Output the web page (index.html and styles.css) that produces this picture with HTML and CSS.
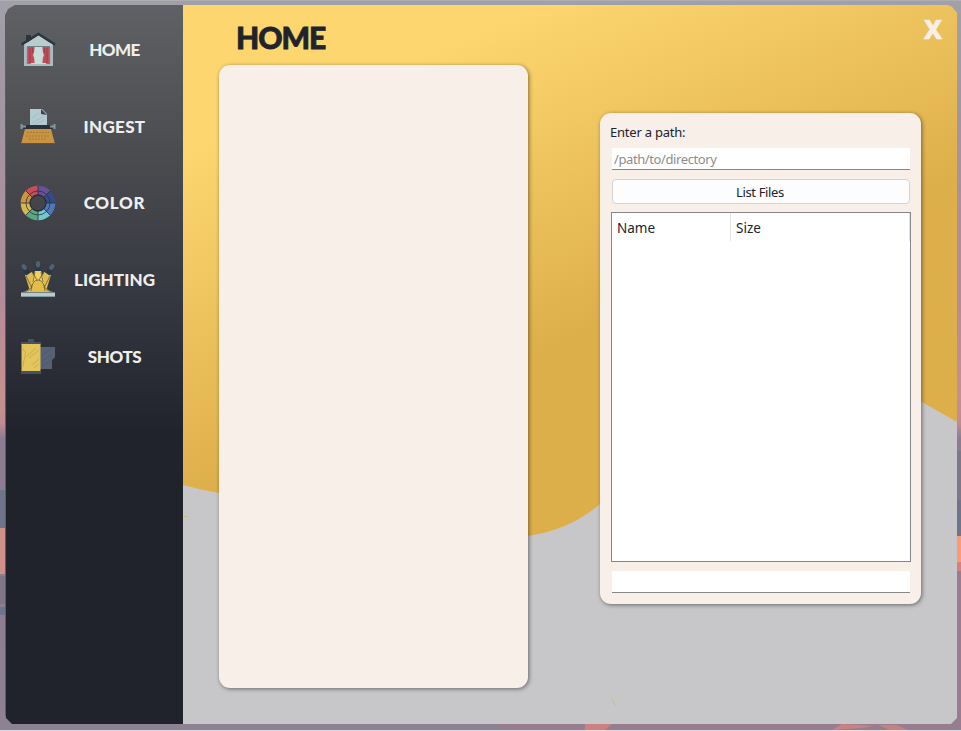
FILE: index.html
```html
<!DOCTYPE html>
<html lang="en">
<head>
<meta charset="utf-8">
<title>Home</title>
<link rel="stylesheet" href="styles.css">
</head>
<body>
<svg class="desktop" viewBox="0 0 961 731" aria-hidden="true">
  <defs>
    <linearGradient id="sky" x1="0" y1="0" x2="0" y2="1">
      <stop offset="0" stop-color="#a1a0a8"/><stop offset=".15" stop-color="#a196a3"/><stop offset=".4" stop-color="#b28c98"/><stop offset=".54" stop-color="#c68f90"/><stop offset=".58" stop-color="#c08b92"/><stop offset=".6" stop-color="#8b7c92"/><stop offset="1" stop-color="#8d8194"/>
    </linearGradient>
  </defs>
  <rect width="961" height="731" fill="url(#sky)"/>
  <rect width="961" height="1" fill="#aeadb2"/>
  <path fill="#707488" d="M0 490h6v38H0zM0 607h6v8H0zM955 500h6v36h-6z"/>
  <path fill="#ce9089" d="M0 528h6v46H0z"/>
  <path fill="#7d7789" d="M0 576h6v28H0zM955 451h6v49h-6z"/>
  <path fill="#ff9a75" d="M955 536h6v26h-6z"/>
  <path fill="#d7817e" d="M955 562h6v9h-6z"/>
  <path fill="#987d90" d="M955 571h6v160h-6zM500 723h461v8H500z"/>
  <path fill="#ca817f" d="M585 723h28l-8 7h-20zM832 730l10-6 18 1 14 1-12 2zM878 725h18l12 5h-18z"/>
  <rect y="730" width="961" height="1" fill="#dedde0"/>
</svg>
<div class="window">
  <nav class="sidebar">
    <a class="item">
      <svg class="icon" viewBox="0 0 36 36">
        <path fill="#2d3440" d="M6 4h5v7H6z"/>
        <path fill="#9fb3b5" d="M4 12h29v23H4z"/>
        <path fill="#b9cdce" d="M5 13 18.500 4 32 13v3H5z"/>
        <path fill="#6f8389" d="M7 15h23v18H7z"/>
        <path fill="#c9dcdc" d="M11 16h15v17H11z"/>
        <path fill="#c44c58" d="M8 16h6.500c0 4-.5 6-1.500 8 1 2 1.500 4 1.500 8H8zM29 16h-6.500c0 4 .5 6 1.500 8-1 2-1.500 4-1.500 8H29z"/>
        <path stroke="#853d49" stroke-width=".7" d="M10 17v15M12.500 17v5M27 17v15M24.500 17v5"/>
        <path fill="none" stroke="#2d3542" stroke-width="2.600" d="M1.500 13.500 18.500 3 35 13.500"/>
        <path stroke="#a9bdbd" stroke-width="2" d="M4 34h29M5 14v20M32 14v20"/>
      </svg>
      <span class="label w-home">HOME</span>
    </a>
    <a class="item">
      <svg class="icon" viewBox="0 0 36 36">
        <path fill="#b3cbd0" d="M10 1h12l5 5v15H10z"/><path fill="#3c464f" d="m21 1 6 6-6-1z"/>
        <path stroke="#98b1b7" stroke-width=".6" d="m12 10 7-5M12 15l12-7M12 18l12-6"/>
        <path fill="#29313d" d="M5 17h26l2 4H3z"/>
        <path stroke="#85979d" stroke-width="2" d="M1 18.500h5M30 18.500h5M1.500 16v5M34.500 16v5"/>
        <path fill="#c9933f" d="M5 21h26l4 15H1z"/><path fill="#6c5132" d="M1 35h34v1H1z"/>
        <path stroke="#9a7338" stroke-width=".8" stroke-dasharray="2 1" d="M7 24.500h22M6 28h24M9 31h18"/>
      </svg>
      <span class="label w-ingest">INGEST</span>
    </a>
    <a class="item">
      <svg class="icon" viewBox="0 0 36 36">
        <g fill="none" stroke-width="9" stroke-dasharray="10 70.425">
          <circle cx="18" cy="18" r="12.800" stroke="#68509a" transform="rotate(-90 18 18)"/>
          <circle cx="18" cy="18" r="12.800" stroke="#344b88" transform="rotate(-45 18 18)"/>
          <circle cx="18" cy="18" r="12.800" stroke="#5076bd" transform="rotate(0 18 18)"/>
          <circle cx="18" cy="18" r="12.800" stroke="#70cad0" transform="rotate(45 18 18)"/>
          <circle cx="18" cy="18" r="12.800" stroke="#58a980" transform="rotate(90 18 18)"/>
          <circle cx="18" cy="18" r="12.800" stroke="#d4b850" transform="rotate(135 18 18)"/>
          <circle cx="18" cy="18" r="12.800" stroke="#cf963f" transform="rotate(180 18 18)"/>
          <circle cx="18" cy="18" r="12.800" stroke="#c64e58" transform="rotate(225 18 18)"/>
        </g>
        <circle cx="18" cy="18" r="12" fill="none" stroke="#30323f" stroke-width=".8"/>
        <circle cx="18" cy="18" r="8" fill="none" stroke="#292d39" stroke-width="1.300"/>
        <path stroke="#2c303a" stroke-width=".8" d="M18 1v9M18 26v9M1 18h9M26 18h9M6 6l6 6M24 24l6 6M30 6l-6 6M12 24l-6 6"/>
      </svg>
      <span class="label w-color">COLOR</span>
    </a>
    <a class="item">
      <svg class="icon" viewBox="0 0 36 36">
        <path fill="#dfbd52" d="m5 14 7-3 8 19H10zM31 14l-7-3-8 19h10z"/>
        <path fill="#f0d166" d="M15 10h6l2 6 2 15H11l2-15z"/>
        <path fill="#e2bd4c" d="M3 31q6-2 8-5 2-7 7-7t7 7q2 3 8 5z"/>
        <path fill="none" stroke="#695d35" stroke-width=".8" d="m6 15 6 12M13 12l4 7M30 15l-6 12M23 12l-4 7M15 11l-2 10M21 11l2 10M11 30q1-11 7-11t7 11M3 31q8-1 9-7M33 31q-8-1-9-7"/>
        <path stroke="#2b3746" stroke-width="5" d="m4.500 8 4 5M18 5v5M31.500 8l-4 5"/>
        <path stroke="#506171" stroke-width="4" stroke-linecap="round" d="m3.500 5 1.500 2M18 2v2.500M32.500 5 31 7"/>
        <path fill="#b6cbca" d="M1 31.500h34V36H1z"/><path stroke="#82999d" d="M1 35.500h34"/>
      </svg>
      <span class="label w-lighting">LIGHTING</span>
    </a>
    <a class="item">
      <svg class="icon" viewBox="0 0 36 36">
        <path fill="#566274" d="M20 9h15v10l-3 3v9H20z"/>
        <path stroke="#4c586a" stroke-width=".7" d="m22 17 9-6M22 23l11-7M22 28l9-6"/>
        <path fill="#46525f" d="M8 1h6v3h7v3H1V4h7zM1 33h20v3H1z"/>
        <path fill="#e4c55b" d="M1.500 6h19v27h-19z"/>
        <path fill="none" stroke="#b59a49" stroke-width=".6" d="M3 11q4 3 2 8t-2 10M7 18l9-8M9 20l10-8M12 27l7-6M14 30l5-4"/>
      </svg>
      <span class="label w-shots">SHOTS</span>
    </a>
  </nav>
  <main class="stage">
    <svg class="backdrop" viewBox="183 5 774 719" aria-hidden="true">
      <defs><linearGradient id="gold" gradientUnits="userSpaceOnUse" x1="293" y1="108" x2="417" y2="404"><stop offset="0" stop-color="#fdd66f"/><stop offset="1" stop-color="#ddaf4b"/></linearGradient></defs>
      <path fill="#c7c7c9" d="M183 5h774v719H183z"/>
      <path fill="url(#gold)" d="M183 5h774v417L922 402C850 358 740 380 670 430 640 455 620 485 600 504Q570 530 528 536C430 550 330 521 219 493Q201 490 183 485z"/>
      <path stroke="#d6ba70" d="M184 516.500h4M612.500 699.500l3 6"/>
    </svg>
    <header class="header"><h1 class="title">HOME</h1><button class="close">X</button></header>
    <div class="panels">
      <section class="card preview"></section>
      <section class="card browser">
        <label class="prompt" for="path">Enter a path:</label>
        <input class="field" id="path" placeholder="/path/to/directory">
        <button class="list">List Files</button>
        <div class="table"><div class="row"><span class="cell name">Name</span><span class="cell size">Size</span></div></div>
        <input class="field result" aria-label="Result">
      </section>
    </div>
  </main>
</div>
</body>
</html>
```
FILE: styles.css
```css
* { box-sizing: border-box; }
body { margin: 0; width: 961px; height: 731px; padding: 5px 4px 7px 5px; overflow: hidden; font-family: "Noto Sans", sans-serif; color: #20232c; }
.desktop { position: absolute; inset: 0; width: 961px; height: 731px; z-index: -1; }
.window { display: flex; width: 952px; height: 719px; overflow: hidden; clip-path: polygon(0 10px, 3px 4px, 10px 0, 942px 0, 947px 2px, 952px 8px, 952px 713px, 946px 719px, 7px 719px, 1px 713px, 0 709px); }
.sidebar { width: 178px; flex: none; padding: 6px 0 0 14px; background: linear-gradient(#606164, #4a4b4f 155px, #363941 285px, #20232b 430px); border-left: 1px solid #5d5d66; }
.item { display: flex; align-items: center; height: 76.700px; }
.icon { width: 36px; height: 36px; flex: none; filter: blur(.3px); }
.label { flex: 1; margin: 1px 14px 0 4px; text-align: center; color: #eeeeee; font: 900 17px/20px Lato, sans-serif; white-space: nowrap; }
.w-home { letter-spacing: -.6px; }
.w-ingest { letter-spacing: .3px; }
.w-color { letter-spacing: .7px; }
.w-lighting { letter-spacing: .1px; }
.w-shots { letter-spacing: -.4px; }
.stage { position: relative; width: 774px; }
.backdrop { position: absolute; inset: 0; width: 774px; height: 719px; }
.header { position: relative; display: flex; justify-content: space-between; height: 60px; padding: 12px 14px 0 53px; }
.title { margin: 0; font: 900 30px/40px Lato, sans-serif; letter-spacing: -1px; -webkit-text-stroke: .8px #20232c; }
.close { border: 0; padding: 0; width: 20px; height: 24px; background: none; color: #f8efe9; font: 800 26px/23px "Noto Sans", sans-serif; -webkit-text-stroke: .6px #f8efe9; }
.panels { position: relative; display: flex; justify-content: space-between; padding: 0 36px; }
.card { border-radius: 11px; background: #f8efe9; box-shadow: 1px 1px 4px rgb(0 0 0 / 48%); }
.preview { width: 309px; height: 623px; }
.browser { display: flex; flex-direction: column; width: 321px; height: 491px; margin-top: 48px; padding: 10px 11px 11px; }
.prompt { height: 18px; margin: 0 0 7px -1px; font: 13px/18px "Noto Sans", sans-serif; letter-spacing: -.22px; }
.field { width: 298px; height: 22px; flex: none; margin-left: 1px; padding: 1px 2px 0; border: 0; border-bottom: 1px solid #868789; border-radius: 0; background: #fff; font: 13px/20px "Noto Sans", sans-serif; letter-spacing: -.4px; }
.field::placeholder { color: #8c8c8c; opacity: 1; }
.list { width: 298px; height: 25px; margin: 9px 0 8px 1px; padding: 0 2px 0 0; border: 1px solid #d3d3d5; border-radius: 4px; background: #fdfdfd; color: #20232c; font: 13px/20px "Noto Sans", sans-serif; letter-spacing: -.35px; }
.table { width: 300px; height: 350px; border: 1px solid #85878d; background: #fff; }
.row { display: flex; height: 28px; font: 13.500px/30px "Noto Sans", sans-serif; }
.cell { padding-left: 5px; border-right: 1px solid #e5e5e5; }
.name { width: 119px; }
.size { flex: 1; }
.result { margin-top: 9px; }
```
